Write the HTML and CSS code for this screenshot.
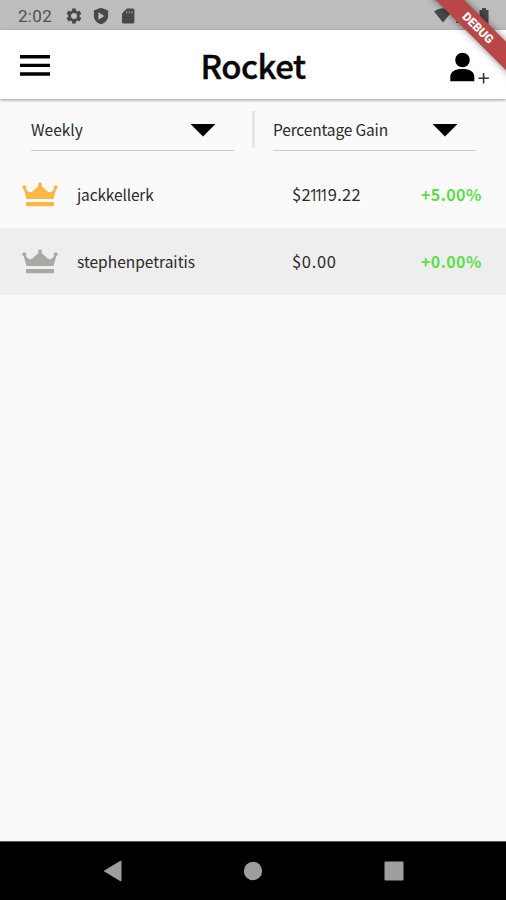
FILE: index.html
```html
<!DOCTYPE html>
<html lang="en">
<head>
<meta charset="utf-8">
<title>Rocket</title>
<link rel="stylesheet" href="styles.css">
</head>
<body>
<div class="screen">
  <div class="status">
    <span class="clock">2:02</span>
    <svg class="gear" width="18" height="18" viewBox="0 0 24 24"><path fill-rule="evenodd" d="M19.4 13a7.500 7.500 0 0 0 0-2l2.100-1.600a.5.5 0 0 0 .1-.7l-2-3.400a.5.5 0 0 0-.6-.2l-2.500 1a7 7 0 0 0-1.700-1L14.400 2.400a.5.5 0 0 0-.5-.4h-4a.5.5 0 0 0-.4.4l-.4 2.700a7 7 0 0 0-1.700 1l-2.500-1a.5.5 0 0 0-.6.2l-2 3.400a.5.5 0 0 0 .1.7L4.500 11a7.500 7.500 0 0 0 0 2l-2.100 1.600a.5.5 0 0 0-.1.7l2 3.400c.1.200.4.300.6.200l2.500-1a7 7 0 0 0 1.700 1l.4 2.700c0 .2.200.4.4.4h4c.3 0 .5-.2.5-.4l.4-2.700a7 7 0 0 0 1.700-1l2.500 1c.2.1.5 0 .6-.2l2-3.400a.5.5 0 0 0-.1-.7zM12 16a4 4 0 1 1 0-8 4 4 0 0 1 0 8z"/></svg>
    <svg class="shield" width="18" height="18" viewBox="0 0 24 24"><path fill-rule="evenodd" d="M12 1 2.500 4.500V12c0 5 4 9.500 9.500 11 5.500-1.500 9.500-6 9.500-11V4.500zM8.500 7 16.500 12l-8 5z"/></svg>
    <svg class="sd" width="16" height="18" viewBox="0 0 20 24"><path fill-rule="evenodd" d="M16.500 2H8.500L2 8.500V20c0 1.100.9 2 2 2h12.500c1.100 0 2-.9 2-2V4c0-1.100-.9-2-2-2z"/><path fill="#888" d="M7.500 5h1.600v3.500H7.500zM11 5h1.600v3.500H11zM14.500 5h1.600v3.500h-1.600z"/></svg>
    <svg class="system" width="58" height="18" viewBox="0 0 58 18"><path d="M2 4.500Q11-2 20 4.500L11 15.500zM24 16V15L37 2v14zM47.500 3H50V1h4v2h2.500v13.500h-9z"/></svg>
  </div>
  <header class="appbar">
    <svg class="menu" width="30" height="22" viewBox="0 0 30 22"><path d="M0 0h30v3.400H0zM0 8.700h30v3.400H0zM0 17.300h30v3.400H0z"/></svg>
    <h1>Rocket</h1>
    <svg class="add" width="40" height="32" viewBox="0 0 40 32"><circle cx="12.500" cy="8" r="7.300"/><path d="M.3 29.300V25C.3 19.500 5 17 12.300 17s12 2.500 12 8v4.300z"/><path d="M33.600 21v10.500M28.500 26.200h10.400" fill="none" stroke="#333" stroke-width="1.600"/></svg>
  </header>
  <section class="filters">
    <div class="select"><span class="weekly">Weekly</span><svg width="26" height="13" viewBox="0 0 26 13"><path d="M.5 0h25L13 12.500z"/></svg></div>
    <div class="divider"></div>
    <div class="select"><span class="gain">Percentage Gain</span><svg width="26" height="13" viewBox="0 0 26 13"><path d="M.5 0h25L13 12.500z"/></svg></div>
  </section>
  <main>
    <div class="row gold">
      <svg class="crown" width="36" height="25" viewBox="0 0 36 25"><path d="M4.500 17 1.700 7A1.900 1.900 0 1 1 3.700 6.500L6 9.500c2 1.500 4.500.5 6-1.500l4.800-4.200a1.900 1.900 0 1 1 2.400 0L24 8c1.500 2 4 3 6 1.500l2.300-3A1.900 1.900 0 1 1 34.300 7L31.500 17z"/><rect x="4" y="20" width="28" height="4.300" rx="1"/></svg>
      <span class="name tight">jackkellerk</span><span class="money long">$2<span class="ones">111</span>9.22</span><span class="pct">+5.00%</span>
    </div>
    <div class="row silver">
      <svg class="crown" width="36" height="25" viewBox="0 0 36 25"><path d="M4.500 17 1.700 7A1.900 1.900 0 1 1 3.700 6.500L6 9.500c2 1.500 4.500.5 6-1.500l4.800-4.200a1.900 1.900 0 1 1 2.400 0L24 8c1.500 2 4 3 6 1.500l2.300-3A1.900 1.900 0 1 1 34.300 7L31.500 17z"/><rect x="4" y="20" width="28" height="4.300" rx="1"/></svg>
      <span class="name">stephenpetraitis</span><span class="money">$0.00</span><span class="pct">+0.00%</span>
    </div>
  </main>
  <nav class="navbar">
    <svg width="20" height="22" viewBox="0 0 20 22"><path d="M.5 11 17 1q1.500-.8 1.500 1v18q0 1.800-1.500 1z"/></svg>
    <svg width="20" height="20" viewBox="0 0 20 20"><circle cx="10" cy="10" r="9.200"/></svg>
    <svg width="20" height="20" viewBox="0 0 20 20"><rect x=".5" y=".5" width="19" height="19" rx="1"/></svg>
  </nav>
  <div class="ribbon">DEBUG</div>
</div>
</body>
</html>
```

FILE: styles.css
```css
* { box-sizing: border-box; }
body { margin: 0; }
svg { display: block; flex: none; }

.screen {
  position: relative;
  display: flex;
  flex-direction: column;
  width: 506px;
  height: 900px;
  overflow: hidden;
  background: #fafafa;
  color: #2a2a2a;
  font-family: "Noto Sans CJK JP", "Noto Sans", sans-serif;
  font-size: 15.5px;
}

.status {
  display: flex;
  align-items: center;
  height: 30px;
  flex: none;
  padding: 1px 16px 0 18px;
  background: #bdbdbd;
  fill: #484848;
}
.clock {
  width: 47px;
  font: 17px/20px Roboto, sans-serif;
  letter-spacing: .3px;
  color: #505050;
}
.shield { margin-left: 9px; }
.sd { margin-left: 10px; }
.system { margin-left: auto; }

.appbar {
  position: relative;
  display: flex;
  align-items: center;
  justify-content: space-between;
  height: 69px;
  flex: none;
  padding: 2px 16px 0 20px;
  background: #fff;
  box-shadow: 0 1px 3px rgba(0, 0, 0, .4);
}
.appbar h1 {
  margin: -2px 0 0 6px;
  font-size: 33px;
  line-height: 50px;
  font-weight: 500;
  letter-spacing: -.5px;
  color: #080808;
  -webkit-text-stroke: .4px #080808;
}
.add { margin-top: 5px; }

.filters {
  display: flex;
  height: 62px;
  flex: none;
  padding: 12px 30px 0 31px;
}
.select {
  display: flex;
  align-items: center;
  justify-content: space-between;
  flex: 1;
  height: 40px;
  padding: 0 18px 0 0;
  border-bottom: 1px solid #ccc;
}
.select span { margin-top: -3px; }
.gain { letter-spacing: -.15px; }
.divider {
  width: 3px;
  height: 37px;
  margin: 0 18px 0 18px;
  background: #e6e6e6;
}

.row {
  display: flex;
  align-items: center;
  height: 67px;
  padding-left: 22px;
}
.row span { margin-top: -1px; }
.silver { background: #eee; }
.gold .crown { fill: #fdb748; }
.silver .crown { fill: #a8a8a5; }
.row .name { width: 215px; margin-left: 19px; }
.row .tight { letter-spacing: -.15px; }
.money { width: 129px; font-size: 16.5px; letter-spacing: .7px; }
.long { letter-spacing: .25px; }
.ones {
  font-family: "Open Sans", sans-serif;
  font-size: 16px;
  line-height: 1;
  letter-spacing: -4px;
  margin: 0 3px 0 -1.500px;
}
.pct { font-size: 16px; font-weight: 700; letter-spacing: .4px; color: #5ade49; }

.navbar {
  display: flex;
  align-items: center;
  justify-content: space-between;
  height: 59px;
  margin-top: auto;
  padding: 0 102.500px 1px;
  border-top: 1px solid #555;
  background: #000;
  fill: #9e9e9e;
}

.ribbon {
  position: absolute;
  top: 18px;
  left: 417px;
  width: 122px;
  height: 20px;
  background: #b94747;
  box-shadow: 0 0 7px rgba(0, 0, 0, .5);
  color: #fff;
  font: 900 12px/20px Roboto, sans-serif;
  text-align: center;
  transform: rotate(45deg);
}
```
